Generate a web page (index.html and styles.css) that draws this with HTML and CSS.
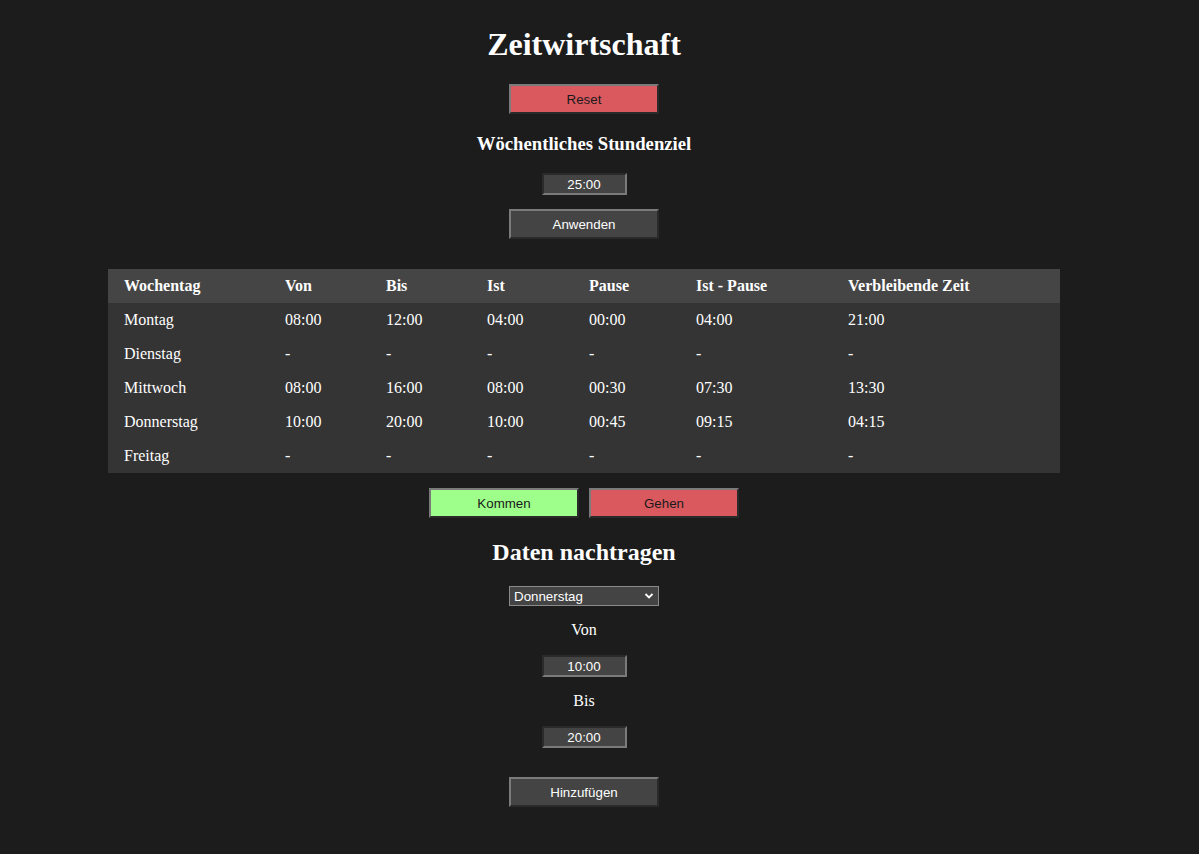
FILE: index.html
```html
<!DOCTYPE html>
<html lang="de">
<head>
<meta charset="utf-8">
<title>Zeitwirtschaft</title>
<link rel="stylesheet" href="styles.css">
</head>
<body>
<main class="page">
  <h1 class="title">Zeitwirtschaft</h1>
  <button class="btn btn-red">Reset</button>
  <h3 class="subtitle">Wöchentliches Stundenziel</h3>
  <input class="time-input" type="text" value="25:00">
  <button class="btn btn-apply">Anwenden</button>

  <table class="week">
    <colgroup>
      <col class="c1"><col class="c2"><col class="c3"><col class="c4"><col class="c5"><col class="c6"><col class="c7">
    </colgroup>
    <thead>
      <tr><th>Wochentag</th><th>Von</th><th>Bis</th><th>Ist</th><th>Pause</th><th>Ist - Pause</th><th>Verbleibende Zeit</th></tr>
    </thead>
    <tbody>
      <tr><td>Montag</td><td>08:00</td><td>12:00</td><td>04:00</td><td>00:00</td><td>04:00</td><td>21:00</td></tr>
      <tr><td>Dienstag</td><td>-</td><td>-</td><td>-</td><td>-</td><td>-</td><td>-</td></tr>
      <tr><td>Mittwoch</td><td>08:00</td><td>16:00</td><td>08:00</td><td>00:30</td><td>07:30</td><td>13:30</td></tr>
      <tr><td>Donnerstag</td><td>10:00</td><td>20:00</td><td>10:00</td><td>00:45</td><td>09:15</td><td>04:15</td></tr>
      <tr><td>Freitag</td><td>-</td><td>-</td><td>-</td><td>-</td><td>-</td><td>-</td></tr>
    </tbody>
  </table>

  <div class="actions">
    <button class="btn btn-green">Kommen</button>
    <button class="btn btn-red">Gehen</button>
  </div>

  <h2 class="section">Daten nachtragen</h2>
  <div class="select-wrap">
    <select class="day-select">
      <option>Montag</option>
      <option>Dienstag</option>
      <option>Mittwoch</option>
      <option selected>Donnerstag</option>
      <option>Freitag</option>
    </select>
    <svg class="chevron" width="10" height="8" viewBox="0 0 10 8"><path d="M1.5 2 L5 5.5 L8.5 2" fill="none" stroke="#fff" stroke-width="1.8"/></svg>
  </div>
  <p class="label">Von</p>
  <input class="time-input" type="text" value="10:00">
  <p class="label">Bis</p>
  <input class="time-input" type="text" value="20:00">
  <button class="btn btn-add">Hinzufügen</button>
</main>
</body>
</html>
```

FILE: styles.css
```css
html, body {
  margin: 0;
  padding: 0;
  background: #1c1c1c;
  color: #ffffff;
  font-family: "Liberation Serif", "Times New Roman", serif;
}

.page {
  width: 1168px;
  display: flex;
  flex-direction: column;
  align-items: center;
  padding-bottom: 40px;
}

.title {
  font-size: 32px;
  line-height: 36px;
  font-weight: bold;
  margin: 26px 0 22px;
}

.subtitle {
  font-size: 18.72px;
  line-height: 21px;
  font-weight: bold;
  margin: 19px 0 19px;
}

.section {
  font-size: 24px;
  line-height: 28px;
  font-weight: bold;
  margin: 20px 0 20px;
}

.btn {
  box-sizing: border-box;
  width: 150px;
  height: 30px;
  font-family: "Liberation Sans", Arial, sans-serif;
  font-size: 13.33px;
  border-style: solid;
  border-width: 2px;
  border-color: #7a7a7a #2a2a2a #2a2a2a #7a7a7a;
  background: #444444;
  color: #ffffff;
  padding: 0;
  margin: 0;
}

.btn-red {
  background: #d9595f;
  color: #1a1a1a;
}

.btn-green {
  background: #9eff8a;
  color: #1a1a1a;
}

.btn-apply {
  margin-top: 14px;
}

.btn-add {
  margin-top: 29px;
}

.time-input {
  box-sizing: border-box;
  width: 85px;
  height: 22px;
  margin: 0;
  padding: 0;
  text-align: center;
  background: #444444;
  color: #ffffff;
  font-family: "Liberation Sans", Arial, sans-serif;
  font-size: 13.33px;
  border-style: solid;
  border-width: 2px;
  border-color: #2a2a2a #7a7a7a #7a7a7a #2a2a2a;
}

.week {
  width: 952px;
  margin-top: 30px;
  border-collapse: collapse;
  table-layout: fixed;
  font-size: 16px;
}

.c1 { width: 161px; }
.c2 { width: 101px; }
.c3 { width: 101px; }
.c4 { width: 102px; }
.c5 { width: 107px; }
.c6 { width: 152px; }
.c7 { width: 228px; }

.week th,
.week td {
  text-align: left;
  padding: 0 16px;
  height: 34px;
  line-height: 18px;
  box-sizing: border-box;
}

.week thead tr {
  background: #454545;
}

.week tbody tr {
  background: #343434;
}

.actions {
  display: flex;
  gap: 10px;
  margin-top: 15px;
}

.select-wrap {
  position: relative;
  width: 150px;
  height: 20px;
}

.day-select {
  appearance: none;
  -webkit-appearance: none;
  box-sizing: border-box;
  width: 150px;
  height: 20px;
  margin: 0;
  padding: 0 0 0 4px;
  background: #444444;
  color: #ffffff;
  border: 1px solid #8a8a8a;
  border-radius: 0;
  font-family: "Liberation Sans", Arial, sans-serif;
  font-size: 13.33px;
}

.chevron {
  position: absolute;
  right: 5px;
  top: 6px;
  pointer-events: none;
}

.label {
  font-size: 16px;
  line-height: 18px;
  margin: 15px 0 16px;
}
```
